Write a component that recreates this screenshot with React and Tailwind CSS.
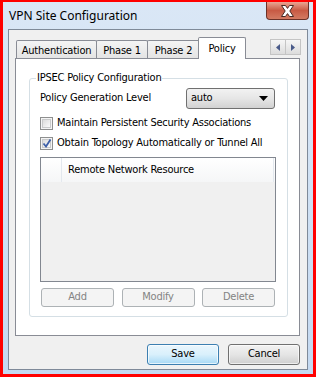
import React from "react";

const F = { fontFamily: '"DejaVu Sans Condensed", "Liberation Sans", Arial, sans-serif', letterSpacing: "-0.22px" };

function Tab({ label, w, selected, first }) {
  if (selected) {
    return (
      <div
        className="relative z-10 -ml-[2px] -mb-px flex h-[22px] items-start justify-center rounded-t-[2px] border border-b-0 border-[#898c95] bg-white pt-[3px] text-[11px] text-black"
        style={{ width: w }}
      >
        {label}
      </div>
    );
  }
  return (
    <div
      className={`flex h-[18px] items-start justify-center rounded-t-[2px] border border-b-0 border-[#898c95] bg-gradient-to-b from-[#f4f4f4] to-[#e4e4e4] pt-[2px] text-[11px] text-black ${first ? "" : "-ml-px"}`}
      style={{ width: w }}
    >
      {label}
    </div>
  );
}

function Checkbox({ checked }) {
  return (
    <div className="flex h-[13px] w-[13px] shrink-0 items-center justify-center border border-[#8e8f8f] bg-[#f4f4f4]">
      <div className="relative h-[9px] w-[9px] border border-[#c9cacb] bg-gradient-to-br from-[#dcdcdc] to-[#fbfbfb]">
        {checked && (
          <svg className="absolute -left-[1px] -top-[2px]" width="10" height="11" viewBox="0 0 10 11">
            <path d="M1.5 5.5 L4 8.5 L8.5 1.5" fill="none" stroke="#3d5fa8" strokeWidth="1.8" />
          </svg>
        )}
      </div>
    </div>
  );
}

function DisabledButton({ label }) {
  return (
    <div className="flex h-[19px] w-[73px] items-center justify-center rounded-[3px] border border-[#adb2b5] bg-[#f4f4f4] text-[11px] text-[#838383]">
      {label}
    </div>
  );
}

export default function App() {
  return (
    <div className="h-[377px] w-[316px] border-[3px] border-t-2 border-[#ff0000] bg-[#ff0000]" style={F}>
      <div className="flex h-full w-full flex-col bg-gradient-to-b from-[#dae7f6] via-[#d0e1f4] to-[#c4d9f1] px-[5px] pb-[4px]">
        {/* title bar */}
        <div className="relative flex h-[27px] shrink-0 items-start">
          <div
            className="pl-[1px] pt-[6px] text-[12px] leading-[16px] text-black"
            style={{ fontFamily: '"Noto Sans", "Open Sans", sans-serif', letterSpacing: "0" }}
          >
            VPN Site Configuration
          </div>
          <div className="absolute right-[-1px] top-0 flex h-[18px] w-[43px] items-center justify-center rounded-b-[4px] border border-t-0 border-[#6b3128] bg-gradient-to-b from-[#e9a593] via-[#c85a44] to-[#d37a62]">
            <svg width="15" height="12" viewBox="0 0 15 12">
              <path
                d="M1.5 0.5 L5.5 0.5 L7.5 3.4 L9.5 0.5 L13.5 0.5 L9.8 6 L13.5 11.5 L9.5 11.5 L7.5 8.6 L5.5 11.5 L1.5 11.5 L5.2 6 Z"
                fill="#ffffff"
                stroke="#4a2a24"
                strokeWidth="1"
              />
            </svg>
          </div>
        </div>

        {/* client area */}
        <div className="flex flex-1 flex-col border border-[#7f8a99] bg-[#f0f0f0] pl-[6px] pr-[7px] pt-[7px]">
          {/* tab strip */}
          <div className="flex h-[21px] items-end pl-[1px]">
            <Tab label="Authentication" w={81} first />
            <Tab label="Phase 1" w={52} />
            <Tab label="Phase 2" w={53} />
            <Tab label="Policy" w={48} selected />
            <div className="ml-auto mb-[3px] mr-[-1px] flex">
              <div className="flex h-[16px] w-[16px] items-center justify-center border border-[#c4c4c4] bg-gradient-to-b from-[#f6f6f6] to-[#dcdcdc]">
                <svg width="4" height="7" viewBox="0 0 4 7"><path d="M4 0 L0 3.5 L4 7 Z" fill="#4a5b8a" /></svg>
              </div>
              <div className="-ml-px flex h-[16px] w-[16px] items-center justify-center border border-[#c4c4c4] bg-gradient-to-b from-[#f6f6f6] to-[#dcdcdc]">
                <svg width="4" height="7" viewBox="0 0 4 7"><path d="M0 0 L4 3.5 L0 7 Z" fill="#4a5b8a" /></svg>
              </div>
            </div>
          </div>

          {/* tab pane */}
          <div className="flex h-[278px] flex-col border border-[#898c95] bg-white pl-[13px] pr-[11px] pt-[12px]">
            {/* group box */}
            <div className="relative flex h-[246px] flex-col">
              <div className="absolute left-0 right-0 top-[7px] bottom-0 rounded-[3px] border border-[#d5dfe5]" />
              <div className="relative z-10 ml-[7px] self-start bg-white px-[1px] text-[11px] leading-[14px] text-black">
                IPSEC Policy Configuration
              </div>
              <div className="relative z-10 flex flex-col pl-[11px] pr-[12px]">
                <div className="mt-[3px] flex h-[21px] items-center justify-between">
                  <span className="text-[11px] text-black">Policy Generation Level</span>
                  <div className="mr-[1px] flex h-[21px] w-[89px] items-center justify-between rounded-[3px] border border-[#707070] bg-gradient-to-b from-[#f2f2f2] via-[#e6e6e6] to-[#d2d2d2] pl-[4px] pr-[6px] text-[11px] text-black">
                    <span>auto</span>
                    <svg width="9" height="5" viewBox="0 0 9 5"><path d="M0 0 L9 0 L4.5 5 Z" fill="#000" /></svg>
                  </div>
                </div>
                <div className="mt-[7px] flex h-[15px] items-center gap-[4px] text-[11px] text-black">
                  <Checkbox />
                  <span>Maintain Persistent Security Associations</span>
                </div>
                <div className="mt-[5px] flex h-[15px] items-center gap-[4px] text-[11px] text-black">
                  <Checkbox checked />
                  <span>Obtain Topology Automatically or Tunnel All</span>
                </div>
                {/* list view */}
                <div className="mt-[6px] flex h-[125px] flex-col border border-[#828790] bg-[#f0f0f0]">
                  <div className="flex h-[24px] bg-gradient-to-b from-[#ffffff] to-[#f5f6f7]">
                    <div className="w-[21px] border-r border-[#e3e8ee]" />
                    <div className="flex flex-1 items-center border-r border-[#e3e8ee] pl-[6px] text-[11px] text-black">
                      Remote Network Resource
                    </div>
                    <div className="w-[1px]" />
                  </div>
                </div>
                <div className="mt-[6px] flex justify-between px-[1px]">
                  <DisabledButton label="Add" />
                  <DisabledButton label="Modify" />
                  <DisabledButton label="Delete" />
                </div>
              </div>
            </div>
          </div>

          {/* bottom buttons */}
          <div className="mt-[8px] flex justify-end gap-[9px]">
            <div className="flex h-[21px] w-[72px] items-center justify-center rounded-[3px] border border-[#3c7fb1] bg-gradient-to-b from-[#eaf6fd] via-[#d9f0fc] to-[#a7d9f5] text-[11px] text-black shadow-[inset_0_0_0_1px_#ffffffb0]">
              Save
            </div>
            <div className="flex h-[21px] w-[72px] items-center justify-center rounded-[3px] border border-[#707070] bg-gradient-to-b from-[#f2f2f2] via-[#e5e5e5] to-[#cfcfcf] text-[11px] text-black shadow-[inset_0_0_0_1px_#ffffffa0]">
              Cancel
            </div>
          </div>
        </div>
      </div>
    </div>
  );
}
